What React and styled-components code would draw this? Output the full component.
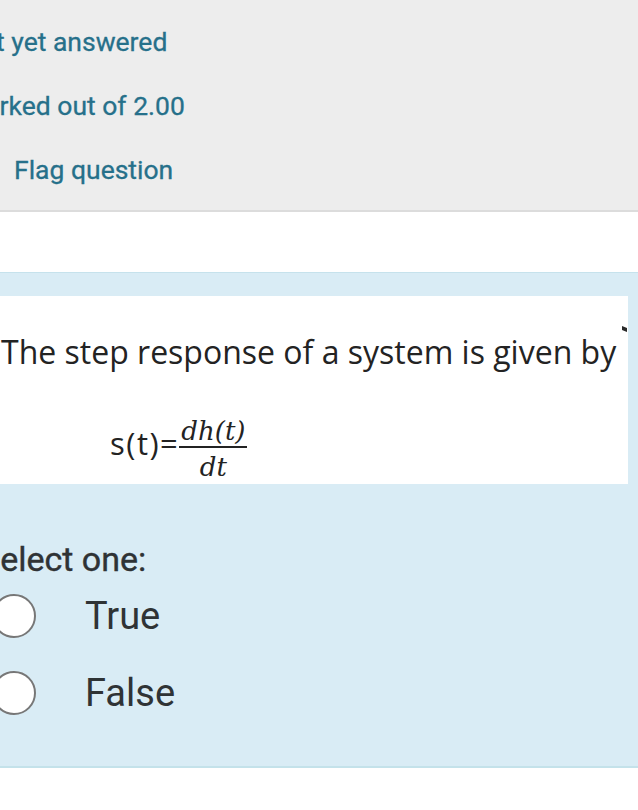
import styled, { createGlobalStyle } from "styled-components";

const GlobalStyle = createGlobalStyle`
  body {
    margin: 0;
    background: #fff;
    overflow: hidden;
  }
`;

export default function App() {
  const options = ["True", "False"];

  return (
    <>
      <GlobalStyle />
      <Viewport>
        <Scroller>
          <InfoPanel>
            <InfoLine>Not yet answered</InfoLine>
            <InfoLine>Marked out of 2.00</InfoLine>
            <InfoLine $indent>Flag question</InfoLine>
          </InfoPanel>

          <Gap />

          <QuestionPanel>
            <ImageBox>
              <Prompt>The step response of a system is given by</Prompt>
              <Tick />
              <Formula>
                <Lhs>s(t)=</Lhs>
                <Fraction>
                  <Numerator>dh(t)</Numerator>
                  <Denominator>dt</Denominator>
                </Fraction>
              </Formula>
            </ImageBox>

            <SelectLabel>Select one:</SelectLabel>
            {options.map((item) => (
              <OptionRow key={item}>
                <Radio />
                <OptionLabel>{item}</OptionLabel>
              </OptionRow>
            ))}
          </QuestionPanel>
        </Scroller>
      </Viewport>
    </>
  );
}

const Viewport = styled.div`
  width: 638px;
  height: 810px;
  overflow: hidden;
  font-family: Roboto, "Liberation Sans", sans-serif;
`;

const Scroller = styled.div`
  width: 700px;
  margin-left: -40px;
`;

const InfoPanel = styled.div`
  background: #ededed;
  border-bottom: 2px solid #dcdcdc;
  padding: 10px 0 8px 2px;
  height: 192px;
`;

const InfoLine = styled.div`
  height: 64px;
  line-height: 64px;
  font-size: 26.5px;
  color: #26708a;
  -webkit-text-stroke: 0.3px #26708a;
  padding-left: ${(p) => (p.$indent ? "52px" : "0")};
`;

const Gap = styled.div`
  height: 60px;
`;

const QuestionPanel = styled.div`
  background: #d9ecf5;
  border-top: 1px solid #c6e2ec;
  border-bottom: 2px solid #c4e2ea;
  padding-top: 23px;
  height: 470px;
  box-sizing: content-box;
`;

const ImageBox = styled.div`
  position: relative;
  width: 668px;
  height: 188px;
  background: #fff;
  display: flex;
  flex-direction: column;
  padding-left: 41px;
  box-sizing: border-box;
`;

const Prompt = styled.div`
  margin-top: 36px;
  height: 40px;
  line-height: 40px;
  font-family: "Open Sans", Lato, sans-serif;
  font-size: 32px;
  color: #232323;
  white-space: nowrap;
`;

const Tick = styled.div`
  position: absolute;
  right: 1px;
  top: 31px;
  width: 5px;
  height: 4px;
  background: #2a2a2a;
  transform: skewY(20deg);
`;

const Formula = styled.div`
  display: flex;
  align-items: center;
  margin-top: 36px;
  padding-left: 109px;
  font-family: "Open Sans", Lato, sans-serif;
  color: #232323;
  line-height: 36px;
`;

const Lhs = styled.span`
  font-size: 31px;
  letter-spacing: 1.5px;
`;

const Fraction = styled.div`
  display: flex;
  flex-direction: column;
  align-items: center;
  font-family: "DejaVu Serif", "Liberation Serif", serif;
  font-style: italic;
  font-size: 26px;
  line-height: 22px;
  margin-top: 12px;
`;

const Numerator = styled.div`
  padding: 0 2px 4px;
  border-bottom: 2px solid #232323;
`;

const Denominator = styled.div`
  padding-top: 8px;
`;

const SelectLabel = styled.div`
  margin-top: 57px;
  padding-left: 20px;
  height: 36px;
  line-height: 36px;
  font-size: 34px;
  color: #2f3335;
  -webkit-text-stroke: 0.4px #2f3335;
`;

const OptionRow = styled.div`
  display: flex;
  align-items: center;
  height: 77px;
  padding-left: 32px;
`;

const Radio = styled.div`
  width: 40px;
  height: 40px;
  border-radius: 50%;
  border: 2px solid #777;
  background: #fff;
  flex-shrink: 0;
`;

const OptionLabel = styled.div`
  margin-left: 49px;
  font-size: 38px;
  color: #2f3335;
`;
